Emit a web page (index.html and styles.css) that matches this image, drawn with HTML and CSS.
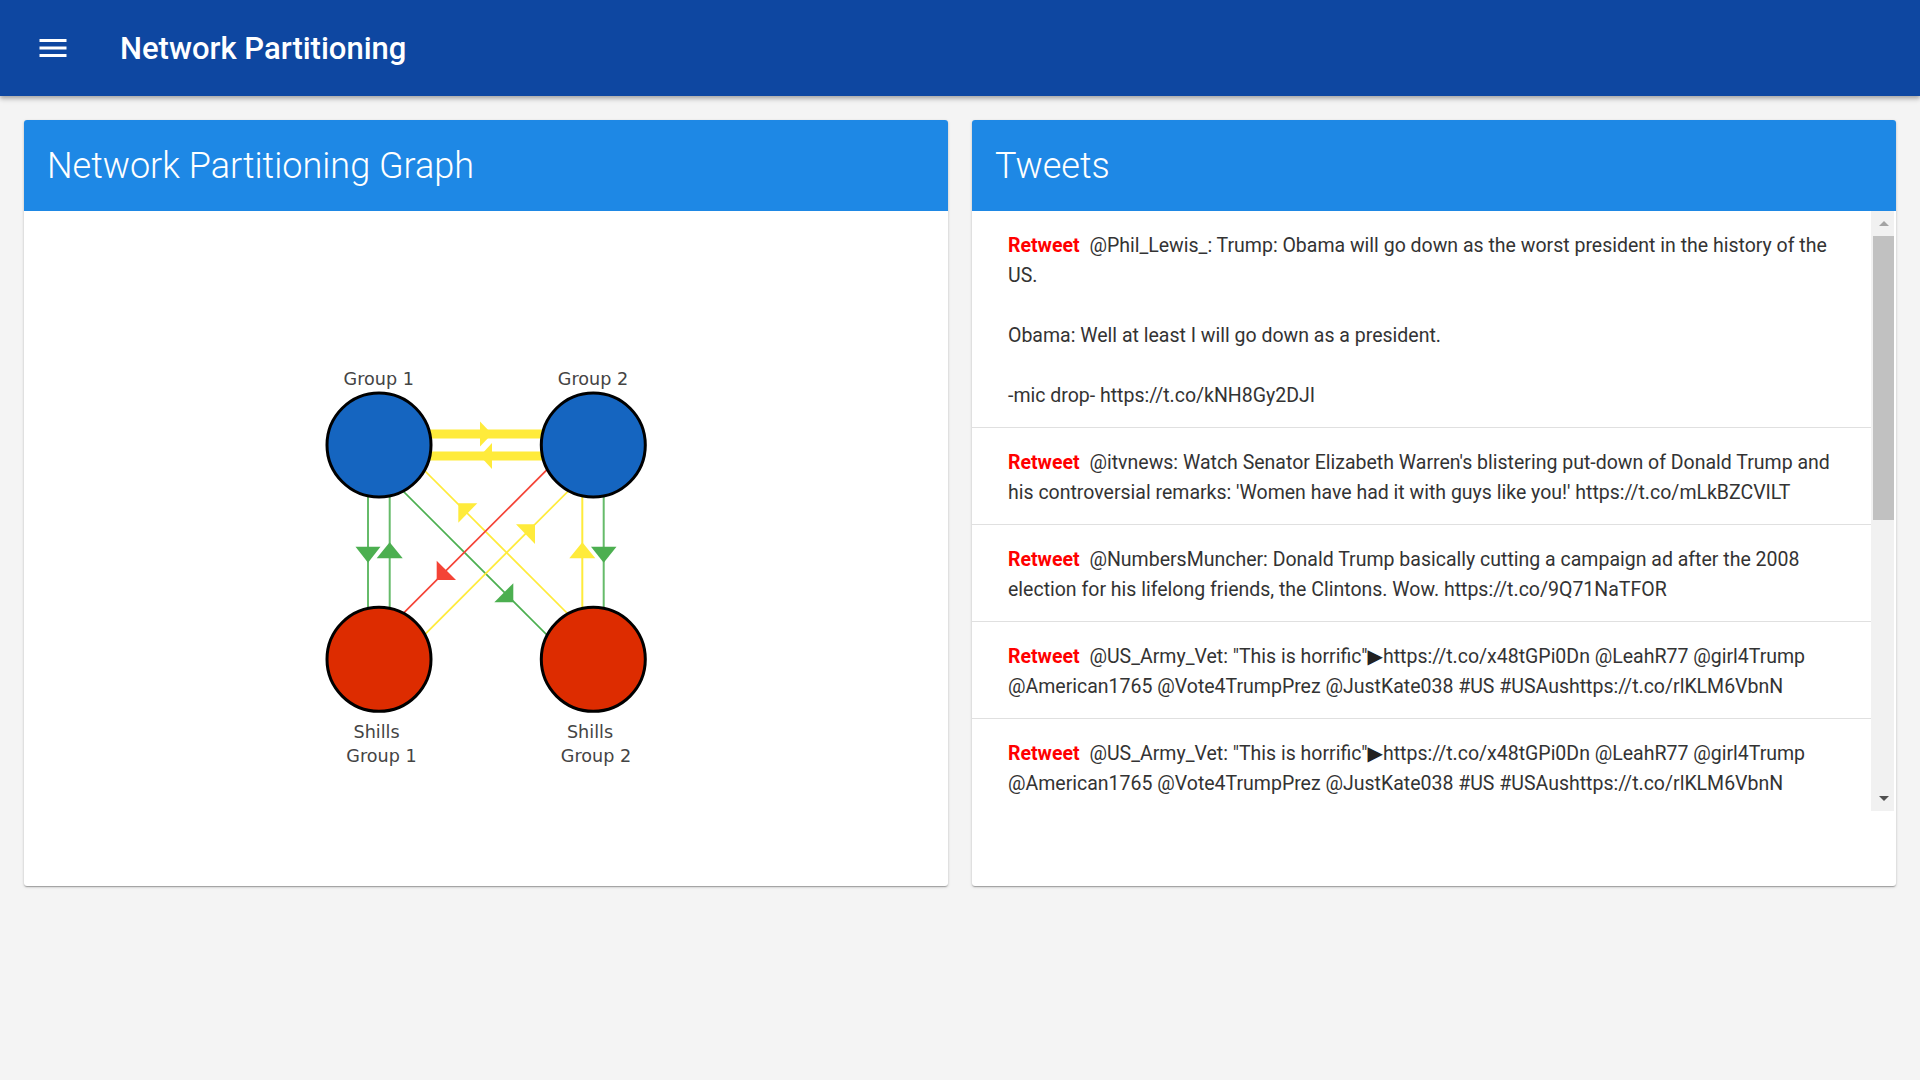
FILE: index.html
```html
<!DOCTYPE html>
<html lang="en">
<head>
<meta charset="utf-8">
<title>Network Partitioning</title>
<link rel="stylesheet" href="styles.css">
</head>
<body>
<header class="topbar">
  <svg class="menu-icon" viewBox="0 0 24 24" width="36" height="36" aria-hidden="true">
    <path d="M3 18h18v-2H3v2zm0-5h18v-2H3v2zm0-7v2h18V6H3z" fill="#fff"/>
  </svg>
  <h1 class="topbar-title">Network Partitioning</h1>
</header>

<main class="content">
  <section class="card">
    <div class="card-header">Network Partitioning Graph</div>
    <div class="card-body graph-body">
      <svg class="graph" width="924" height="675" viewBox="0 0 924 675">
        <!-- horizontal thick edges -->
        <line x1="355" y1="223" x2="569" y2="223" stroke="#ffeb3b" stroke-width="9"/>
        <line x1="355" y1="245" x2="569" y2="245" stroke="#ffeb3b" stroke-width="9"/>
        <polygon points="456,210.5 468,223 456,235.5" fill="#ffeb3b"/>
        <polygon points="468,232 456,245 468,258" fill="#ffeb3b"/>

        <!-- vertical edges -->
        <line x1="344" y1="234" x2="344" y2="448" stroke="#66bb6a" stroke-width="2"/>
        <line x1="365.7" y1="234" x2="365.7" y2="448" stroke="#66bb6a" stroke-width="2"/>
        <line x1="558.3" y1="234" x2="558.3" y2="448" stroke="#ffeb3b" stroke-width="2"/>
        <line x1="579.7" y1="234" x2="579.7" y2="448" stroke="#66bb6a" stroke-width="2"/>
        <polygon points="331.5,335.7 356.5,335.7 344,351.7" fill="#4caf50"/>
        <polygon points="352.7,347.3 378.7,347.3 365.7,331.3" fill="#4caf50"/>
        <polygon points="545.3,347.3 571.3,347.3 558.3,331.3" fill="#ffeb3b"/>
        <polygon points="567,335.7 592.5,335.7 579.7,351.7" fill="#4caf50"/>

        <!-- diagonal edges -->
        <line x1="355" y1="214" x2="569" y2="428" stroke="#ffeb3b" stroke-width="1.7"/>
        <line x1="355" y1="256" x2="569" y2="470" stroke="#4caf50" stroke-width="1.7"/>
        <line x1="569" y1="212.7" x2="355" y2="426.7" stroke="#f44336" stroke-width="1.7"/>
        <line x1="569" y1="255.3" x2="355" y2="469.3" stroke="#ffeb3b" stroke-width="1.7"/>
        <polygon points="434.3,292.3 453.3,292.3 434.3,311.7" fill="#ffeb3b"/>
        <polygon points="489.3,391.3 470.3,391.3 489.3,372.3" fill="#4caf50"/>
        <polygon points="412.7,369 412.7,349.7 432,369" fill="#f44336"/>
        <polygon points="511,313.3 492,313.3 511,333" fill="#ffeb3b"/>

        <!-- nodes -->
        <circle cx="355" cy="234" r="52" fill="#1565c0" stroke="#000" stroke-width="3"/>
        <circle cx="569.3" cy="234" r="52" fill="#1565c0" stroke="#000" stroke-width="3"/>
        <circle cx="355" cy="448.3" r="52" fill="#dd2c00" stroke="#000" stroke-width="3"/>
        <circle cx="569.3" cy="448.3" r="52" fill="#dd2c00" stroke="#000" stroke-width="3"/>

        <!-- labels -->
        <text class="node-label" x="354.8" y="174">Group 1</text>
        <text class="node-label" x="569" y="174">Group 2</text>
        <text class="node-label" x="352.6" y="527">Shills</text>
        <text class="node-label" x="357.5" y="550.7">Group 1</text>
        <text class="node-label" x="566" y="527">Shills</text>
        <text class="node-label" x="572" y="550.7">Group 2</text>
      </svg>
    </div>
  </section>

  <section class="card">
    <div class="card-header">Tweets</div>
    <div class="card-body tweets-body">
      <div class="tweet-scroller">
        <ul class="tweet-list">
          <li class="tweet"><span class="tag">Retweet</span> @Phil_Lewis_: Trump: Obama will go down as the worst president in the history of the US.<br><br>Obama: Well at least I will go down as a president.<br><br>-mic drop- https://t.co/kNH8Gy2DJI</li>
          <li class="tweet"><span class="tag">Retweet</span> @itvnews: Watch Senator Elizabeth Warren's blistering put-down of Donald Trump and his controversial remarks: 'Women have had it with guys like you!' https://t.co/mLkBZCVILT</li>
          <li class="tweet"><span class="tag">Retweet</span> @NumbersMuncher: Donald Trump basically cutting a campaign ad after the 2008 election for his lifelong friends, the Clintons. Wow. https://t.co/9Q71NaTFOR</li>
          <li class="tweet"><span class="tag">Retweet</span> @US_Army_Vet: "This is horrific"<span class="tri">▶</span>https://t.co/x48tGPi0Dn @LeahR77 @girl4Trump @American1765 @Vote4TrumpPrez @JustKate038 #US #USAushttps://t.co/rlKLM6VbnN</li>
          <li class="tweet"><span class="tag">Retweet</span> @US_Army_Vet: "This is horrific"<span class="tri">▶</span>https://t.co/x48tGPi0Dn @LeahR77 @girl4Trump @American1765 @Vote4TrumpPrez @JustKate038 #US #USAushttps://t.co/rlKLM6VbnN</li>
        </ul>
        <div class="scrollbar" aria-hidden="true">
          <div class="sb-btn sb-up"><span class="arrow-up"></span></div>
          <div class="sb-track"><div class="sb-thumb"></div></div>
          <div class="sb-btn sb-down"><span class="arrow-down"></span></div>
        </div>
      </div>
    </div>
  </section>
</main>
</body>
</html>
```

FILE: styles.css
```css
* { box-sizing: border-box; }

html, body {
  margin: 0;
  padding: 0;
}

body {
  background: #f4f4f4;
  font-family: Roboto, "Liberation Sans", sans-serif;
  width: 1920px;
  height: 1080px;
  overflow: hidden;
}

.topbar {
  height: 96px;
  background: #0e47a1;
  display: flex;
  align-items: center;
  padding-left: 35px;
  gap: 49px;
  box-shadow: 0 2px 4px rgba(0,0,0,0.25), 0 4px 5px rgba(0,0,0,0.1);
  position: relative;
  z-index: 2;
}

.menu-icon {
  display: block;
  flex: none;
}

.topbar-title {
  margin: 0;
  color: #fff;
  font-size: 31px;
  font-weight: 500;
  line-height: normal;
  letter-spacing: 0;
}

.content {
  padding: 24px;
  display: grid;
  grid-template-columns: 1fr 1fr;
  gap: 24px;
}

.card {
  background: #fff;
  height: 766px;
  border-radius: 3px;
  overflow: hidden;
  display: flex;
  flex-direction: column;
  box-shadow: 0 1px 3px rgba(0,0,0,0.2), 0 1px 1px rgba(0,0,0,0.14), 0 2px 1px -1px rgba(0,0,0,0.12);
}

.card-header {
  height: 91px;
  flex: none;
  background: #1e88e5;
  color: #fff;
  font-size: 36px;
  font-weight: 300;
  display: flex;
  align-items: center;
  padding-left: 23px;
}

.card-body {
  flex: 1;
  min-height: 0;
}

.graph {
  display: block;
}

.node-label {
  font-family: "DejaVu Sans", Verdana, sans-serif;
  font-size: 17.6px;
  fill: #444;
  text-anchor: middle;
}

.tweet-scroller {
  height: 600px;
  display: flex;
  margin-right: 2px;
}

.tweet-list {
  flex: 1;
  list-style: none;
  margin: 0;
  padding: 0;
  overflow: hidden;
}

.tweet {
  padding: 20px 36px 16px 36px;
  border-bottom: 1px solid #e0e0e0;
  font-size: 19.5px;
  line-height: 30px;
  color: #333;
}

.tag {
  color: #ff0000;
  font-weight: 700;
  margin-right: 5px;
}

.tri {
  font-family: "DejaVu Sans", sans-serif;
  font-size: 20px;
  line-height: 1;
  color: #222;
}

.scrollbar {
  width: 23px;
  flex: none;
  background: #f1f1f1;
  display: flex;
  flex-direction: column;
}

.sb-btn {
  height: 25px;
  flex: none;
  display: flex;
  align-items: center;
  justify-content: center;
  padding-left: 2px;
}

.sb-track {
  flex: 1;
  padding-left: 2px;
}

.sb-thumb {
  height: 284px;
  background: #c1c1c1;
}

.arrow-up {
  width: 0;
  height: 0;
  border-left: 5px solid transparent;
  border-right: 5px solid transparent;
  border-bottom: 5px solid #a3a3a3;
}

.arrow-down {
  width: 0;
  height: 0;
  border-left: 5px solid transparent;
  border-right: 5px solid transparent;
  border-top: 5px solid #505050;
}
```
